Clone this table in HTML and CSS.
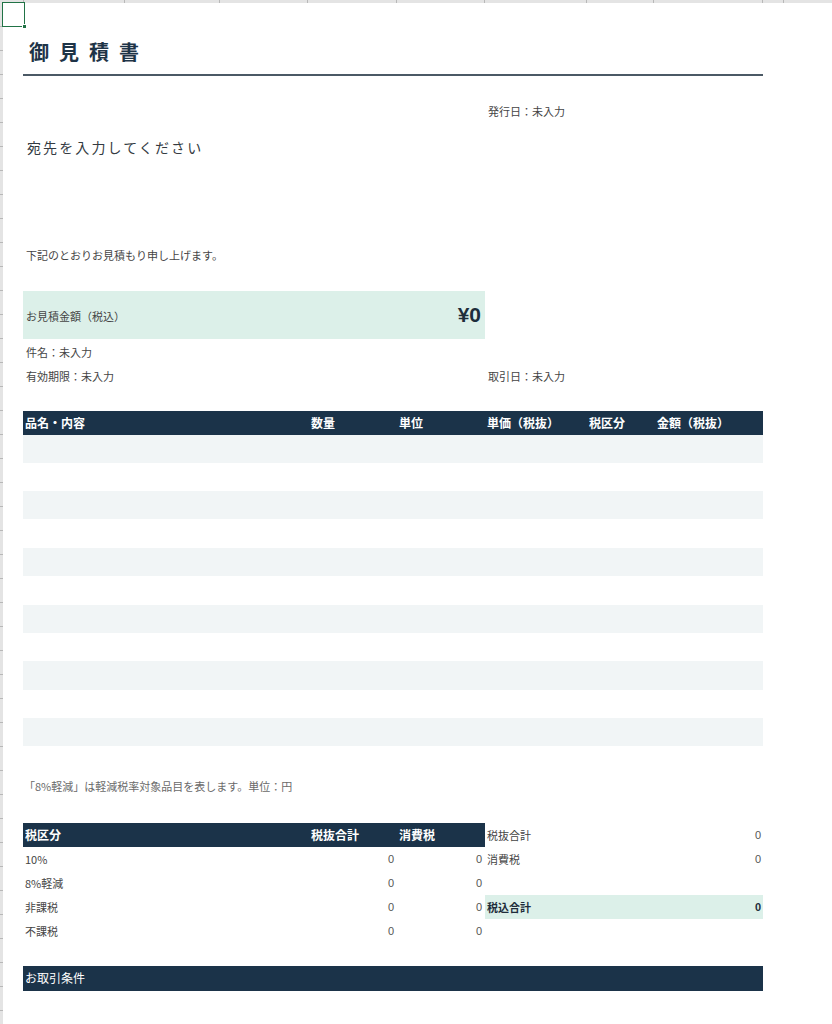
FILE: index.html
```html
<!DOCTYPE html>
<html lang="ja">
<head>
<meta charset="utf-8">
<title>御見積書</title>
<link rel="stylesheet" href="styles.css">
</head>
<body>
<div class="app">
  <div class="colhead">
    <span class="c0"></span><span class="cb"></span><span class="cc"></span><span class="cd"></span><span class="ce"></span><span class="cf"></span><span class="cg"></span><span class="ch"></span><span class="ci"></span><span class="cj"></span><span class="ck"></span>
  </div>
  <div class="main">
    <div class="rowhead"></div>
    <div class="sheet">
      <h1 class="title">御見積書</h1>

      <div class="split meta-issue">
        <div></div>
        <div class="cell">発行日：未入力</div>
      </div>

      <div class="recipient">宛先を入力してください</div>

      <div class="lead">下記のとおりお見積もり申し上げます。</div>

      <div class="amount">
        <span class="amount-label">お見積金額（税込）</span>
        <span class="amount-value">¥0</span>
      </div>

      <div class="split line">
        <div class="cell">件名：未入力</div>
        <div></div>
      </div>
      <div class="split line">
        <div class="cell">有効期限：未入力</div>
        <div class="cell">取引日：未入力</div>
      </div>

      <div class="items">
        <div class="items-head">
          <span class="pad2">品名・内容</span>
          <span class="pad3">数量</span>
          <span class="pad2">単位</span>
          <span class="pad2">単価（税抜）</span>
          <span class="pad2">税区分</span>
          <span class="pad3">金額（税抜）</span>
        </div>
        <div class="row shade"></div>
        <div class="row"></div>
        <div class="row shade"></div>
        <div class="row tall"></div>
        <div class="row shade"></div>
        <div class="row tall"></div>
        <div class="row shade"></div>
        <div class="row"></div>
        <div class="row shade tall"></div>
        <div class="row"></div>
        <div class="row shade"></div>
      </div>

      <div class="note">「8%軽減」は軽減税率対象品目を表します。単位：円</div>

      <div class="tax">
        <div class="th pad2">税区分</div>
        <div class="th pad3">税抜合計</div>
        <div class="th pad2">消費税</div>
        <div class="sum"><span>税抜合計</span><span>0</span></div>

        <div class="td pad2">10%</div>
        <div class="td num">0</div>
        <div class="td num">0</div>
        <div class="sum"><span>消費税</span><span>0</span></div>

        <div class="td pad2">8%軽減</div>
        <div class="td num">0</div>
        <div class="td num">0</div>
        <div class="sum"></div>

        <div class="td pad2">非課税</div>
        <div class="td num">0</div>
        <div class="td num">0</div>
        <div class="sum total"><span>税込合計</span><span>0</span></div>

        <div class="td pad2">不課税</div>
        <div class="td num">0</div>
        <div class="td num">0</div>
        <div class="sum"></div>
      </div>

      <div class="terms">お取引条件</div>
    </div>
  </div>
  <div class="selection"><span class="handle"></span></div>
</div>
</body>
</html>
```

FILE: styles.css
```css
* {
  box-sizing: border-box;
  margin: 0;
  padding: 0;
}

html, body {
  width: 832px;
  height: 1024px;
  overflow: hidden;
  background: #ffffff;
}

body {
  font-family: "Noto Sans CJK JP", "Noto Sans", sans-serif;
  font-size: 11px;
  color: #454545;
}

.app {
  position: relative;
  width: 832px;
  height: 1024px;
}

/* spreadsheet column header strip */
.colhead {
  display: flex;
  height: 3px;
  background: #e4e4e4;
}
.colhead span {
  height: 100%;
  border-right: 1px solid #b8b8b8;
}
.c0 { width: 24px; }
.cb { width: 101px; }
.cc { width: 95px; }
.cd { width: 88px; }
.ce { width: 89px; }
.cf { width: 88px; }
.cg { width: 102px; }
.ch { width: 67px; }
.ci { width: 109px; }
.cj { width: 21px; }
.colhead .ck { flex: 1; border-right: none; }

.main {
  display: flex;
  height: 1021px;
}

.rowhead {
  width: 3px;
  background: repeating-linear-gradient(to bottom, #e4e4e4 0 23px, #b8b8b8 23px 24px);
}

.sheet {
  flex: 1;
  padding-left: 20px;
}

/* title */
.title {
  margin-top: 23px;
  width: 740px;
  height: 50px;
  padding: 5px 0 0 6px;
  border-bottom: 2px solid #4b5965;
  font-size: 20px;
  font-weight: 700;
  letter-spacing: 10px;
  line-height: 42px;
  color: #1e3447;
}

.split {
  display: grid;
  grid-template-columns: 462px 278px;
  height: 24px;
  line-height: 24px;
}
.cell {
  padding-left: 3px;
  white-space: nowrap;
}

.meta-issue {
  margin-top: 23px;
}

.recipient {
  margin-top: 12px;
  height: 24px;
  line-height: 24px;
  padding-left: 4px;
  font-size: 14px;
  letter-spacing: 2.1px;
  color: #343b42;
}

.lead {
  margin-top: 84px;
  height: 24px;
  line-height: 24px;
  padding-left: 3px;
}

.amount {
  margin-top: 24px;
  width: 462px;
  height: 48px;
  display: flex;
  justify-content: space-between;
  align-items: center;
  padding: 0 4px 0 3px;
  background: #dcf0e9;
}
.amount-label {
  padding-top: 1px;
}
.amount-value {
  font-size: 21px;
  font-weight: 700;
  color: #1e2d3b;
  font-family: "Liberation Sans", "Noto Sans CJK JP", sans-serif;
}

.amount + .line {
  margin-top: 1px;
}

/* items table */
.items {
  margin-top: 23px;
  width: 740px;
}
.items-head {
  display: grid;
  grid-template-columns: 285px 89px 88px 102px 67px 109px;
  height: 24px;
  line-height: 24px;
  background: #1b3349;
  color: #ffffff;
  font-size: 12px;
  font-weight: 700;
  white-space: nowrap;
}
.pad2 { padding-left: 2px; }
.pad3 { padding-left: 3px; }

.row {
  height: 28px;
}
.row.tall {
  height: 29px;
}
.row.shade {
  background: #f1f5f6;
}

.note {
  margin-top: 28px;
  height: 24px;
  line-height: 24px;
  padding-left: 1px;
  color: #6a6a6a;
}

/* tax summary */
.tax {
  margin-top: 25px;
  width: 740px;
  display: grid;
  grid-template-columns: 285px 89px 88px 278px;
  grid-auto-rows: 24px;
  line-height: 24px;
}
.th {
  background: #1b3349;
  color: #ffffff;
  font-size: 12px;
  font-weight: 700;
  white-space: nowrap;
}
.td {
  white-space: nowrap;
}
.num {
  text-align: right;
  padding-right: 3px;
  color: #555555;
  font-family: "Liberation Sans", "Noto Sans CJK JP", sans-serif;
}
.sum {
  display: flex;
  justify-content: space-between;
  padding: 0 2px;
}
.sum span:last-child {
  color: #555555;
  font-family: "Liberation Sans", "Noto Sans CJK JP", sans-serif;
}
.sum.total {
  background: #dcf0e9;
  font-weight: 700;
  color: #1e2d3b;
}
.sum.total span:last-child {
  color: #1e2d3b;
}

.terms {
  margin-top: 23px;
  width: 740px;
  height: 25px;
  line-height: 24px;
  padding-left: 2px;
  background: #1b3349;
  color: #ffffff;
  font-size: 12px;
}

/* active cell overlay */
.selection {
  position: absolute;
  left: 2px;
  top: 2px;
  width: 23px;
  height: 25px;
  border: 1.5px solid #217346;
}
.handle {
  position: absolute;
  right: -3px;
  bottom: -3px;
  width: 5px;
  height: 5px;
  background: #217346;
  border: 1px solid #ffffff;
}
```
